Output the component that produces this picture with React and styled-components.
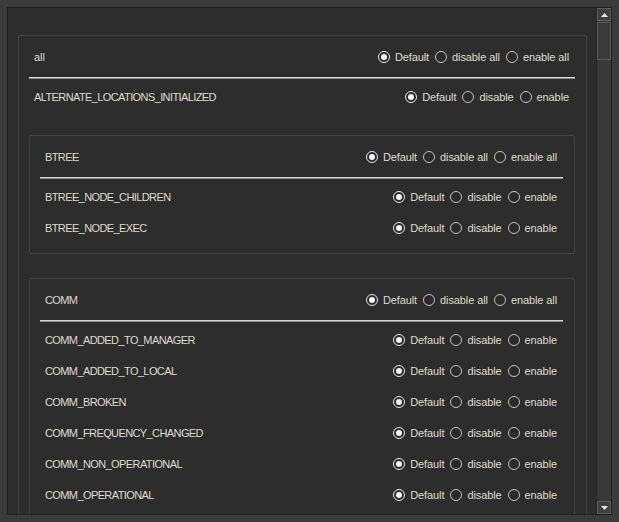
import React, { useState } from 'react';
import styled, { createGlobalStyle } from 'styled-components';

const GlobalStyle = createGlobalStyle`
  html, body {
    margin: 0;
    padding: 0;
    background: #3b3b3b;
  }
  body {
    font-family: "Liberation Sans", Arial, sans-serif;
    font-size: 11px;
    color: #dedcd2;
  }
`;

const Frame = styled.div`
  height: 522px;
  box-sizing: border-box;
  padding: 7px;
`;

const Panel = styled.div`
  height: 100%;
  box-sizing: border-box;
  border: 1px solid #1f1f1f;
  background: #2d2d2d;
  display: flex;
  overflow: hidden;
`;

const Content = styled.div`
  flex: 1;
  overflow: hidden;
  padding: 27px 9px 0 10px;
`;

const ScrollBar = styled.div`
  width: 14px;
  flex: none;
  background: #393939;
  border-left: 1px solid #262626;
  display: flex;
  flex-direction: column;
  justify-content: space-between;
`;

const ArrowButton = styled.div`
  height: 13px;
  box-sizing: border-box;
  border: 1px solid #5c5c5c;
  background: #404040;
  display: flex;
  align-items: center;
  justify-content: center;
`;

const Thumb = styled.div`
  height: 38px;
  margin-top: 1px;
  box-sizing: border-box;
  border: 1px solid #5a5a5a;
  background: #3b3b3b;
`;

const Group = styled.div`
  border: 1px solid #444444;
  border-radius: 2px;
  padding: 0 11px ${(p) => (p.$nested ? '10px' : '0')} 10px;
  margin-top: ${(p) => (p.$nested ? '23px' : '0')};
  & + & {
    margin-top: 24px;
  }
`;

const Header = styled.div`
  height: 41px;
  display: flex;
  align-items: center;
  justify-content: space-between;
  padding: 0 6px 0 5px;
`;

const Separator = styled.div`
  height: 0;
  border-top: 1px solid #dadada;
  border-bottom: 1px solid #8c8c8c;
  margin-bottom: 2px;
`;

const Row = styled.div`
  height: 31px;
  display: flex;
  align-items: center;
  justify-content: space-between;
  padding: 0 6px 0 5px;
`;

const Name = styled.span`
  letter-spacing: -0.6px;
  white-space: nowrap;
`;

const Title = styled.span`
  letter-spacing: ${(p) => (p.$caps ? '-0.6px' : '0')};
`;

const Options = styled.div`
  display: flex;
  align-items: center;
  gap: 6px;
`;

const Option = styled.label`
  display: flex;
  align-items: center;
  gap: 5px;
  cursor: pointer;
  white-space: nowrap;
  letter-spacing: -0.1px;
`;

const Circle = styled.span`
  width: 12px;
  height: 12px;
  box-sizing: border-box;
  border-radius: 50%;
  border: 1px solid ${(p) => (p.$on ? '#e8e8e8' : '#c4c4c4')};
  background: #2a2a2a;
  display: flex;
  align-items: center;
  justify-content: center;
  &::after {
    content: '';
    width: 6px;
    height: 6px;
    border-radius: 50%;
    background: #f4f4f4;
    display: ${(p) => (p.$on ? 'block' : 'none')};
  }
`;

function RadioSet({ all }) {
  const [value, setValue] = useState('default');
  const opts = [
    ['default', 'Default'],
    ['disable', all ? 'disable all' : 'disable'],
    ['enable', all ? 'enable all' : 'enable'],
  ];
  return (
    <Options>
      {opts.map(([key, label]) => (
        <Option key={key} onClick={() => setValue(key)}>
          <Circle $on={value === key} />
          {label}
        </Option>
      ))}
    </Options>
  );
}

function Section({ title, rows, groups, nested }) {
  return (
    <Group $nested={nested}>
      <Header>
        <Title $caps={title !== 'all'}>{title}</Title>
        <RadioSet all />
      </Header>
      <Separator />
      {rows.map((r) => (
        <Row key={r}>
          <Name>{r}</Name>
          <RadioSet />
        </Row>
      ))}
      {groups &&
        groups.map((g) => (
          <Section key={g.title} title={g.title} rows={g.rows} nested />
        ))}
    </Group>
  );
}

const groups = [
  { title: 'BTREE', rows: ['BTREE_NODE_CHILDREN', 'BTREE_NODE_EXEC'] },
  {
    title: 'COMM',
    rows: [
      'COMM_ADDED_TO_MANAGER',
      'COMM_ADDED_TO_LOCAL',
      'COMM_BROKEN',
      'COMM_FREQUENCY_CHANGED',
      'COMM_NON_OPERATIONAL',
      'COMM_OPERATIONAL',
    ],
  },
];

export default function App() {
  return (
    <>
      <GlobalStyle />
      <Frame>
        <Panel>
          <Content>
            <Section title="all" rows={['ALTERNATE_LOCATIONS_INITIALIZED']} groups={groups} />
          </Content>
          <ScrollBar>
            <div>
              <ArrowButton>
                <svg width="7" height="4" viewBox="0 0 7 4">
                  <path d="M3.5 0 L7 4 L0 4 Z" fill="#e6e6e6" />
                </svg>
              </ArrowButton>
              <Thumb />
            </div>
            <ArrowButton>
              <svg width="7" height="4" viewBox="0 0 7 4">
                <path d="M0 0 L7 0 L3.5 4 Z" fill="#e6e6e6" />
              </svg>
            </ArrowButton>
          </ScrollBar>
        </Panel>
      </Frame>
    </>
  );
}
